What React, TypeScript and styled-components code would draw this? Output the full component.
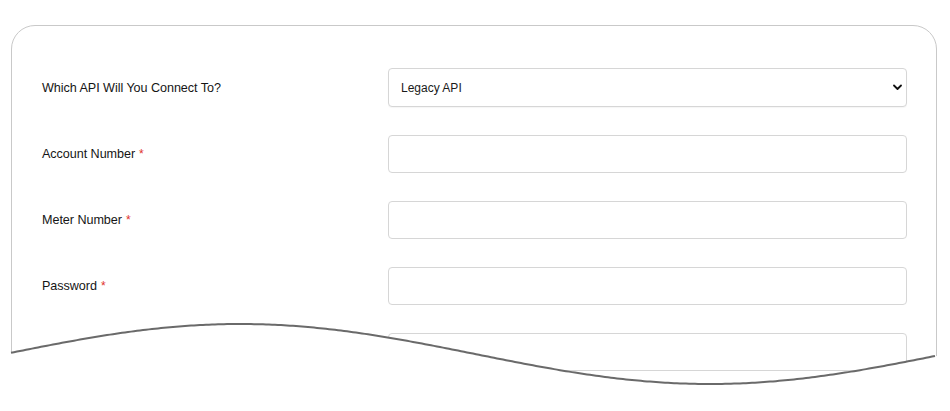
import React from "react";
import styled, { createGlobalStyle } from "styled-components";

const Global = createGlobalStyle`
  html, body { margin: 0; padding: 0; background: #fff; }
  body { font-family: "Liberation Sans", Arial, Helvetica, sans-serif; color: #222; }
  * { box-sizing: border-box; }
`;

const Page = styled.div`
  position: relative;
  width: 950px;
  height: 411px;
  overflow: hidden;
  padding: 25px 13px 0 11px;
`;

const Card = styled.div`
  height: 420px;
  border: 1px solid #c9c9c9;
  border-radius: 24px 24px 0 0;
  padding: 42px 29px 0 30px;
  display: flex;
  flex-direction: column;
  gap: 28px;
`;

const Row = styled.div<{ $h?: number }>`
  display: grid;
  grid-template-columns: 346px 1fr;
  align-items: center;
  height: ${(p) => p.$h ?? 38}px;
`;

const Label = styled.label`
  font-size: 12.6px;
  color: #151515;
  letter-spacing: -0.05px;
`;

const Req = styled.span`
  color: #e0312a;
  margin-left: 4px;
  font-size: 12px;
`;

const fieldBase = `
  width: 100%;
  height: 38px;
  border: 1px solid #d6d6d6;
  border-radius: 4px;
  background: #fff;
  font-family: "Liberation Sans", Arial, Helvetica, sans-serif;
  font-size: 12px;
  color: #1a1a1a;
  outline: none;
`;

const Input = styled.input`
  ${fieldBase}
  padding: 0 12px;
`;

const SelectWrap = styled.div`
  position: relative;
  height: 39px;
`;

const Select = styled.select`
  ${fieldBase}
  height: 39px;
  appearance: none;
  -webkit-appearance: none;
  padding: 0 12px;
  box-shadow: 0 1px 1px rgba(0,0,0,0.04);
`;

const Chevron = styled.svg`
  position: absolute;
  right: 5px;
  top: 16px;
  width: 9px;
  height: 7px;
  pointer-events: none;
`;

const Wave = styled.svg`
  position: absolute;
  left: 0;
  top: 0;
  width: 950px;
  height: 411px;
  pointer-events: none;
`;

function wavePath(): { line: string; fill: string } {
  const pts: string[] = [];
  for (let x = 11; x <= 937; x += 3) {
    const y = 354 - 30 * Math.cos((2 * Math.PI * (x - 240)) / 940);
    pts.push(`${x},${y.toFixed(2)}`);
  }
  const line = "M" + pts.join(" L");
  const fill = line + " L950,357 L950,411 L0,411 L0,352 Z";
  return { line, fill };
}

const fields = ["Account Number", "Meter Number", "Password", "Key"];

export default function App() {
  const { line, fill } = wavePath();
  return (
    <>
      <Global />
      <Page>
        <Card>
          <Row $h={39}>
            <Label>Which API Will You Connect To?</Label>
            <SelectWrap>
              <Select defaultValue="legacy">
                <option value="legacy">Legacy API</option>
                <option value="rest">REST API</option>
              </Select>
              <Chevron viewBox="0 0 9 7">
                <path d="M1 1.5 L4.5 5 L8 1.5" fill="none" stroke="#111" strokeWidth="1.8" strokeLinecap="round" strokeLinejoin="round" />
              </Chevron>
            </SelectWrap>
          </Row>
          {fields.map((f) => (
            <Row key={f}>
              <Label>
                {f}
                <Req>*</Req>
              </Label>
              <Input type={f === "Password" ? "password" : "text"} />
            </Row>
          ))}
        </Card>
        <Wave viewBox="0 0 950 411">
          <path d={fill} fill="#fff" />
          <path d={line} fill="none" stroke="#6a6a6a" strokeWidth="2" />
        </Wave>
      </Page>
    </>
  );
}
